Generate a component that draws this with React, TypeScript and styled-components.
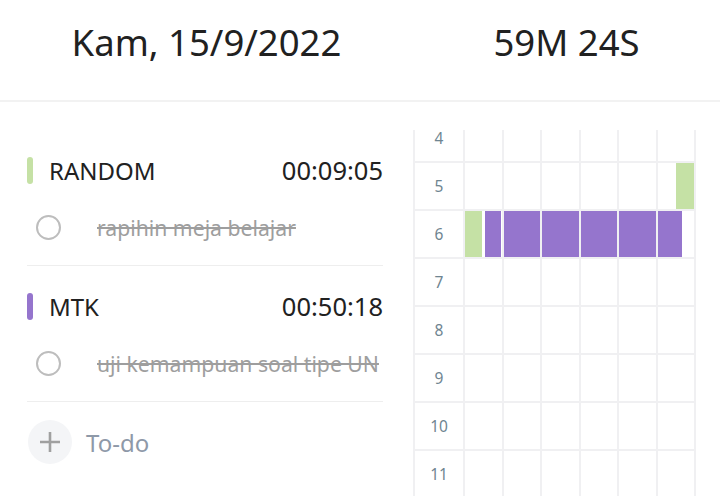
import {useLayoutEffect, useRef} from "react";
import styled, {createGlobalStyle} from "styled-components";

interface ISession {
  start: number; // seconds since midnight
  end: number;
  color: string;
}

interface ISubject {
  name: string;
  color: string;
  total: string;
  task: string;
}

const GREEN = "#c5e1a5";
const PURPLE = "#9575cd";
const ROW_HEIGHT = 48;
const FIRST_HOUR = 4;

const hms = (h: number, m: number, s = 0) => h * 3600 + m * 60 + s;

const subjects: ISubject[] = [
  {name: "RANDOM", color: GREEN, total: "00:09:05", task: "rapihin meja belajar"},
  {name: "MTK", color: PURPLE, total: "00:50:18", task: "uji kemampuan soal tipe UN"},
];

const sessions: ISession[] = [
  {start: hms(5, 55, 10), end: hms(6, 4, 35), color: GREEN},
  {start: hms(6, 5, 35), end: hms(6, 56, 40), color: PURPLE},
];

const hours = Array.from({length: 24 - FIRST_HOUR}, (_, i) => i + FIRST_HOUR);
const slots = [0, 1, 2, 3, 4, 5];

const GlobalStyle = createGlobalStyle`
  html, body {
    margin: 0;
    padding: 0;
    background: #fff;
  }

  body {
    font-family: "Noto Sans", "Open Sans", sans-serif;
    color: #212121;
  }
`;

export default function App() {
  const scrollRef = useRef<HTMLDivElement | null>(null);

  useLayoutEffect(() => {
    // the day view is scrolled a little into the 4 o'clock row
    if (scrollRef.current) {
      scrollRef.current.scrollTop = 15;
    }
  }, []);

  return (
    <>
      <GlobalStyle/>
      <Screen>
        <Header>
          <HeaderCell left>Kam, 15/9/2022</HeaderCell>
          <HeaderCell>59M 24S</HeaderCell>
        </Header>

        <Body>
          <SubjectList>
            {subjects.map((s) => (
              <Section key={s.name}>
                <SubjectRow>
                  <ColorBar color={s.color}/>
                  <SubjectName>{s.name}</SubjectName>
                  <SubjectTime>{s.total}</SubjectTime>
                </SubjectRow>
                <TaskRow>
                  <Check/>
                  <TaskText>{s.task}</TaskText>
                </TaskRow>
              </Section>
            ))}
            <AddRow>
              <AddButton>
                <svg width="22" height="22" viewBox="0 0 22 22">
                  <path d="M11 1v20M1 11h20" stroke="#a0a0a0" strokeWidth="2.6" fill="none"/>
                </svg>
              </AddButton>
              <AddLabel>To-do</AddLabel>
            </AddRow>
          </SubjectList>

          <Timeline ref={scrollRef}>
            {hours.map((h) => (
              <HourRow key={h}>
                <HourLabel>{h}</HourLabel>
                {slots.map((slot) => {
                  const cellStart = h * 3600 + slot * 600;
                  const cellEnd = cellStart + 600;
                  return (
                    <Cell key={slot}>
                      {sessions
                        .filter((s) => s.start < cellEnd && s.end > cellStart)
                        .map((s, i) => {
                          const from = Math.max(s.start, cellStart);
                          const to = Math.min(s.end, cellEnd);
                          return (
                            <Segment
                              key={i}
                              color={s.color}
                              style={{
                                left: `${((from - cellStart) / 600) * 100}%`,
                                width: `${((to - from) / 600) * 100}%`,
                              }}
                            />
                          );
                        })}
                    </Cell>
                  );
                })}
              </HourRow>
            ))}
          </Timeline>
        </Body>
      </Screen>
    </>
  );
}

const Screen = styled.div`
  width: 720px;
  height: 496px;
  overflow: hidden;
  display: flex;
  flex-direction: column;
`;

const Header = styled.div`
  height: 102px;
  flex: 0 0 102px;
  box-sizing: border-box;
  display: flex;
  align-items: center;
  padding-bottom: 16px;
  border-bottom: 2px solid #f2f2f2;
`;

const HeaderCell = styled.div<{ left?: boolean }>`
  flex: ${({left}) => (left ? "0 0 413px" : "1")};
  text-align: center;
  font-size: 36.5px;
  color: #212121;
`;

const Body = styled.div`
  flex: 1;
  display: flex;
  min-height: 0;
`;

const SubjectList = styled.div`
  flex: 0 0 413px;
  box-sizing: border-box;
  padding: 27px 30px 0 27px;
`;

const Section = styled.div`
  padding-top: 21px;
  border-bottom: 1.5px solid #eeeeee;

  & + & {
    padding-top: 20px;
  }
`;

const SubjectRow = styled.div`
  height: 40px;
  display: flex;
  align-items: center;
`;

const ColorBar = styled.div<{ color: string }>`
  width: 6px;
  height: 27px;
  border-radius: 3px;
  background: ${({color}) => color};
  margin-right: 16px;
`;

const SubjectName = styled.div`
  flex: 1;
  font-size: 24px;
  color: #212121;
`;

const SubjectTime = styled.div`
  font-size: 25.5px;
  color: #212121;
`;

const TaskRow = styled.div`
  height: 75px;
  display: flex;
  align-items: center;
  padding-left: 9px;
`;

const Check = styled.div`
  width: 25px;
  height: 25px;
  box-sizing: border-box;
  border: 2px solid #bdbdbd;
  border-radius: 50%;
  margin-right: 36px;
  flex: 0 0 auto;
`;

const TaskText = styled.div`
  font-size: 21.2px;
  color: #9e9e9e;
  text-decoration: line-through;
  white-space: nowrap;
`;

const AddRow = styled.div`
  padding-top: 18px;
  display: flex;
  align-items: center;
`;

const AddButton = styled.div`
  width: 44px;
  height: 44px;
  margin-left: 1px;
  border-radius: 50%;
  background: #f4f5f7;
  display: flex;
  align-items: center;
  justify-content: center;
  margin-right: 14px;
`;

const AddLabel = styled.div`
  font-size: 24px;
  color: #8e99a8;
`;

const Timeline = styled.div`
  flex: 0 0 283px;
  margin-top: 28px;
  overflow-y: auto;
  scrollbar-width: none;

  &::-webkit-scrollbar {
    display: none;
  }
`;

const HourRow = styled.div`
  height: ${ROW_HEIGHT}px;
  box-sizing: border-box;
  display: grid;
  grid-template-columns: 48px repeat(6, 1fr);
  column-gap: 2px;
  padding: 0 2px 2px 2px;
  background: #f0f0f2;
`;

const HourLabel = styled.div`
  background: #fff;
  display: flex;
  align-items: center;
  justify-content: center;
  font-size: 15.5px;
  color: #6f8591;
`;

const Cell = styled.div`
  background: #fff;
  position: relative;
`;

const Segment = styled.div<{ color: string }>`
  position: absolute;
  top: 0;
  bottom: 0;
  background: ${({color}) => color};
`;
